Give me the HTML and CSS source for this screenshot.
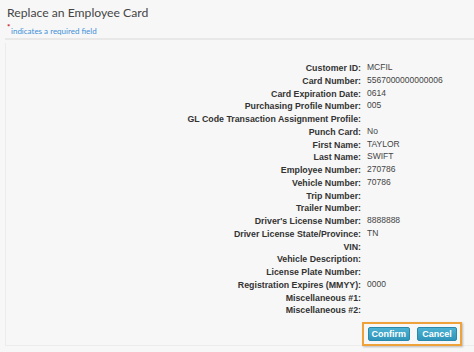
FILE: index.html
```html
<!DOCTYPE html>
<html>
<head>
<meta charset="utf-8">
<link rel="stylesheet" href="styles.css">
</head>
<body>
<div class="page">
  <header class="head">
    <h1 class="title">Replace an Employee Card</h1>
    <div class="req"><span class="star">*</span>indicates a required field</div>
  </header>
  <section class="panel">
    <dl class="fields">
      <dt>Customer ID:</dt><dd>MCFIL</dd>
      <dt>Card Number:</dt><dd>5567000000000006</dd>
      <dt>Card Expiration Date:</dt><dd>0614</dd>
      <dt>Purchasing Profile Number:</dt><dd>005</dd>
      <dt>GL Code Transaction Assignment Profile:</dt><dd></dd>
      <dt>Punch Card:</dt><dd>No</dd>
      <dt>First Name:</dt><dd>TAYLOR</dd>
      <dt>Last Name:</dt><dd>SWIFT</dd>
      <dt>Employee Number:</dt><dd>270786</dd>
      <dt>Vehicle Number:</dt><dd>70786</dd>
      <dt>Trip Number:</dt><dd></dd>
      <dt>Trailer Number:</dt><dd></dd>
      <dt>Driver's License Number:</dt><dd>8888888</dd>
      <dt>Driver License State/Province:</dt><dd>TN</dd>
      <dt>VIN:</dt><dd></dd>
      <dt>Vehicle Description:</dt><dd></dd>
      <dt>License Plate Number:</dt><dd></dd>
      <dt>Registration Expires (MMYY):</dt><dd>0000</dd>
      <dt>Miscellaneous #1:</dt><dd></dd>
      <dt>Miscellaneous #2:</dt><dd></dd>
    </dl>
    <div class="actions">
      <div class="btnbox">
        <button class="btn">Confirm</button>
        <button class="btn">Cancel</button>
      </div>
    </div>
  </section>
</div>
</body>
</html>
```
FILE: styles.css
```css
html, body {
  margin: 0;
  padding: 0;
  background: #f7f7f7;
}
.page {
  width: 474px;
  height: 352px;
  overflow: hidden;
  font-family: "Liberation Sans", Arial, sans-serif;
}
.head {
  margin-left: 5px;
  padding: 5px 0 0 2px;
  height: 40px;
  box-sizing: border-box;
  border-bottom: 2px solid #e8e8e8;
}
.title {
  margin: 0;
  font-family: Lato, "Open Sans", sans-serif;
  font-weight: normal;
  font-size: 12.2px;
  line-height: 15px;
  color: #454545;
}
.req {
  font-family: Lato, "Open Sans", sans-serif;
  font-size: 8px;
  line-height: 10px;
  color: #3d8fd8;
  margin-top: 6px;
  white-space: nowrap;
}
.star {
  display: inline-block;
  color: #c0161b;
  font-weight: bold;
  font-size: 8px;
  line-height: 6px;
  vertical-align: top;
  margin-top: -2px;
  width: 4px;
}
.panel {
  margin: 3px 0 0 5px;
  height: 303px;
  border-left: 1px solid #ececec;
  border-bottom: 1px solid #ececec;
  box-sizing: border-box;
  padding-top: 19px;
}
.fields {
  margin: 0;
  display: grid;
  grid-template-columns: 355px 1fr;
  column-gap: 6px;
  grid-auto-rows: 12.75px;
}
.fields dt {
  text-align: right;
  font-weight: bold;
  font-size: 8.8px;
  line-height: 12.75px;
  color: #333;
}
.fields dd {
  margin: 0;
  font-size: 8.5px;
  line-height: 10px;
  color: #444;
}
.actions {
  display: flex;
  justify-content: flex-end;
  padding: 5px 12px 0 0;
}
.btnbox {
  display: flex;
  gap: 7px;
  padding: 3px 3px 3px 4px;
  border: 2px solid #f0a23a;
  background: #f7f7f7;
  box-shadow: 1px 1px 2px rgba(0,0,0,0.25);
}
.btn {
  font-family: "Liberation Sans", Arial, sans-serif;
  font-weight: bold;
  font-size: 9px;
  color: #fff;
  background: linear-gradient(#4db2d2, #2f95ba);
  border: 1px solid #2a88aa;
  border-radius: 2px;
  height: 14px;
  min-width: 40px;
  padding: 0 3px;
  line-height: 12px;
}
```
